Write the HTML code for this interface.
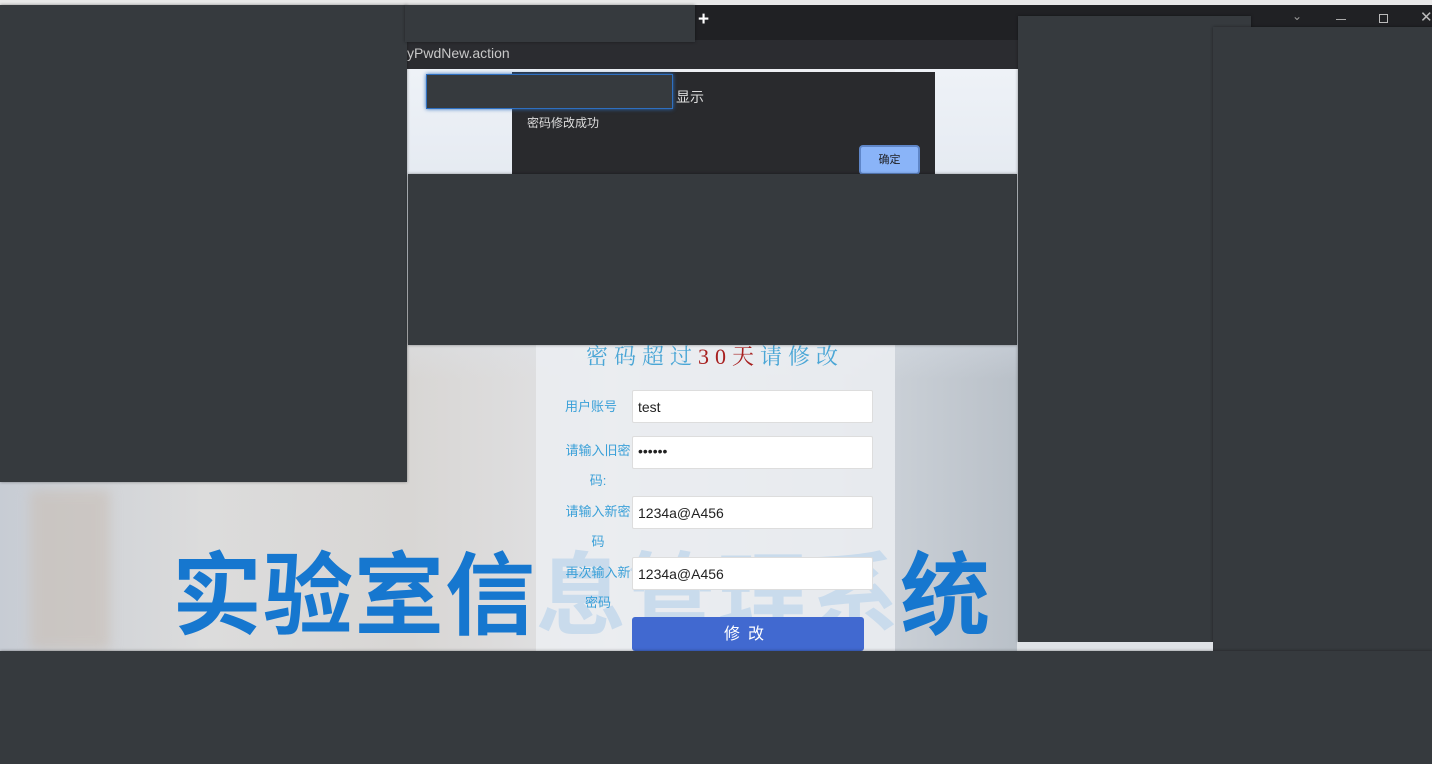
<!DOCTYPE html>
<html><head><meta charset="utf-8"><style>
*{margin:0;padding:0;box-sizing:border-box}
body{width:1432px;height:764px;overflow:hidden;position:relative;background:#fff;font-family:"Liberation Sans","Noto Sans CJK SC",sans-serif}
.a{position:absolute}
.pn{position:absolute;background:#363a3e;box-shadow:0 0 3px rgba(0,0,0,.4)}
</style></head><body>
<div class="a" style="left:0;top:0;width:1432px;height:5px;background:#e8e8e8"></div>
<div class="a" style="left:0;top:5px;width:1432px;height:35px;background:#202124"></div>
<div class="a" style="left:0;top:40px;width:1432px;height:29px;background:#2b2c30"></div>
<div class="a" style="left:407px;top:45px;color:#c8c8c8;font-size:14px">yPwdNew.action</div>
<div class="a" style="left:698px;top:9px;color:#fff;font-size:19px;font-weight:bold">+</div>
<div class="a" style="left:1292px;top:9px;color:#999;font-size:12px">&#8964;</div>
<div class="a" style="left:1336px;top:19px;width:10px;height:1px;background:#aaa"></div>
<div class="a" style="left:1379px;top:14px;width:9px;height:9px;border:1px solid #bbb"></div>
<div class="a" style="left:1420px;top:8px;color:#bbb;font-size:15px">✕</div>
<div class="a" style="left:0;top:69px;width:1020px;height:582px;background:linear-gradient(90deg,#c7ccd4 0%,#dcdcdc 20%,#d8d6d4 40%,#e2e3e6 60%,#d4d9df 80%,#b9c0c8 100%)"></div>
<div class="a" style="left:0;top:69px;width:1020px;height:310px;background:linear-gradient(180deg,#eef2f7,#dfe5ee 60%,rgba(0,0,0,0))"></div>
<div class="a" style="left:30px;top:490px;width:80px;height:160px;background:#c9bfb6;opacity:.6;filter:blur(6px)"></div>
<div class="a" style="left:172px;top:542px;font-size:90px;font-weight:bold;color:#1677cf;letter-spacing:1px;white-space:nowrap;line-height:110px">实验室信息管理系统</div>
<div class="a" style="left:536px;top:69px;width:359px;height:582px;background:rgba(236,238,242,.84)"></div>
<div class="a" style="left:540px;top:340px;width:350px;text-align:center;font-family:'Liberation Serif','Noto Serif CJK SC',serif;font-size:22px;letter-spacing:6px;color:#4aa6d6">密码超过<span style="color:#a82020">30天</span>请修改</div>
<div class="a" style="left:565px;top:396px;font-size:13px;color:#3aa0d8">用户账号</div>
<div class="a" style="left:565px;top:436px;width:66px;font-size:13px;color:#3aa0d8;line-height:30px;text-align:center;word-break:break-all">请输入旧密码:</div>
<div class="a" style="left:565px;top:497px;width:66px;font-size:13px;color:#3aa0d8;line-height:30px;text-align:center;word-break:break-all">请输入新密码</div>
<div class="a" style="left:565px;top:558px;width:66px;font-size:13px;color:#3aa0d8;line-height:30px;text-align:center;word-break:break-all">再次输入新密码</div>
<div class="a" style="left:632px;top:390px;width:241px;height:33px;background:#fff;border:1px solid #ddd;border-radius:2px;padding:8px 5px;font-size:14px;color:#222">test</div>
<div class="a" style="left:632px;top:436px;width:241px;height:33px;background:#fff;border:1px solid #ddd;border-radius:2px;padding:6px 5px;font-size:14px;color:#222">••••••</div>
<div class="a" style="left:632px;top:496px;width:241px;height:33px;background:#fff;border:1px solid #ddd;border-radius:2px;padding:8px 5px;font-size:14px;color:#222">1234a@A456</div>
<div class="a" style="left:632px;top:557px;width:241px;height:33px;background:#fff;border:1px solid #ddd;border-radius:2px;padding:8px 5px;font-size:14px;color:#222">1234a@A456</div>
<div class="a" style="left:632px;top:617px;width:232px;height:34px;background:#4169d0;border-radius:3px;color:#fff;font-size:16px;text-align:center;line-height:36px;letter-spacing:8px">修改</div>
<div class="a" style="left:512px;top:72px;width:423px;height:102px;background:#292a2d"></div>
<div class="a" style="left:676px;top:87px;color:#ddd;font-size:14px">显示</div>
<div class="a" style="left:527px;top:114px;color:#ddd;font-size:12px">密码修改成功</div>
<div class="a" style="left:859px;top:145px;width:61px;height:30px;background:#8ab4f8;border:2px solid #5f86c8;border-radius:4px;color:#202124;font-size:11px;text-align:center;line-height:27px">确定</div>
<div class="a" style="left:426px;top:74px;width:247px;height:35px;background:#363a3e;border:1px solid #2e6fc0;box-shadow:0 0 4px #2e6fc0"></div>
<div class="pn" style="left:0;top:5px;width:407px;height:477px"></div>
<div class="pn" style="left:405px;top:5px;width:290px;height:37px"></div>
<div class="pn" style="left:408px;top:174px;width:609px;height:171px"></div>
<div class="pn" style="left:1018px;top:16px;width:233px;height:626px"></div>
<div class="pn" style="left:1213px;top:27px;width:219px;height:625px"></div>
<div class="a" style="left:1017px;top:642px;width:196px;height:9px;background:#dfe2e6"></div>
<div class="pn" style="left:0;top:651px;width:1432px;height:113px"></div>
</body></html>
